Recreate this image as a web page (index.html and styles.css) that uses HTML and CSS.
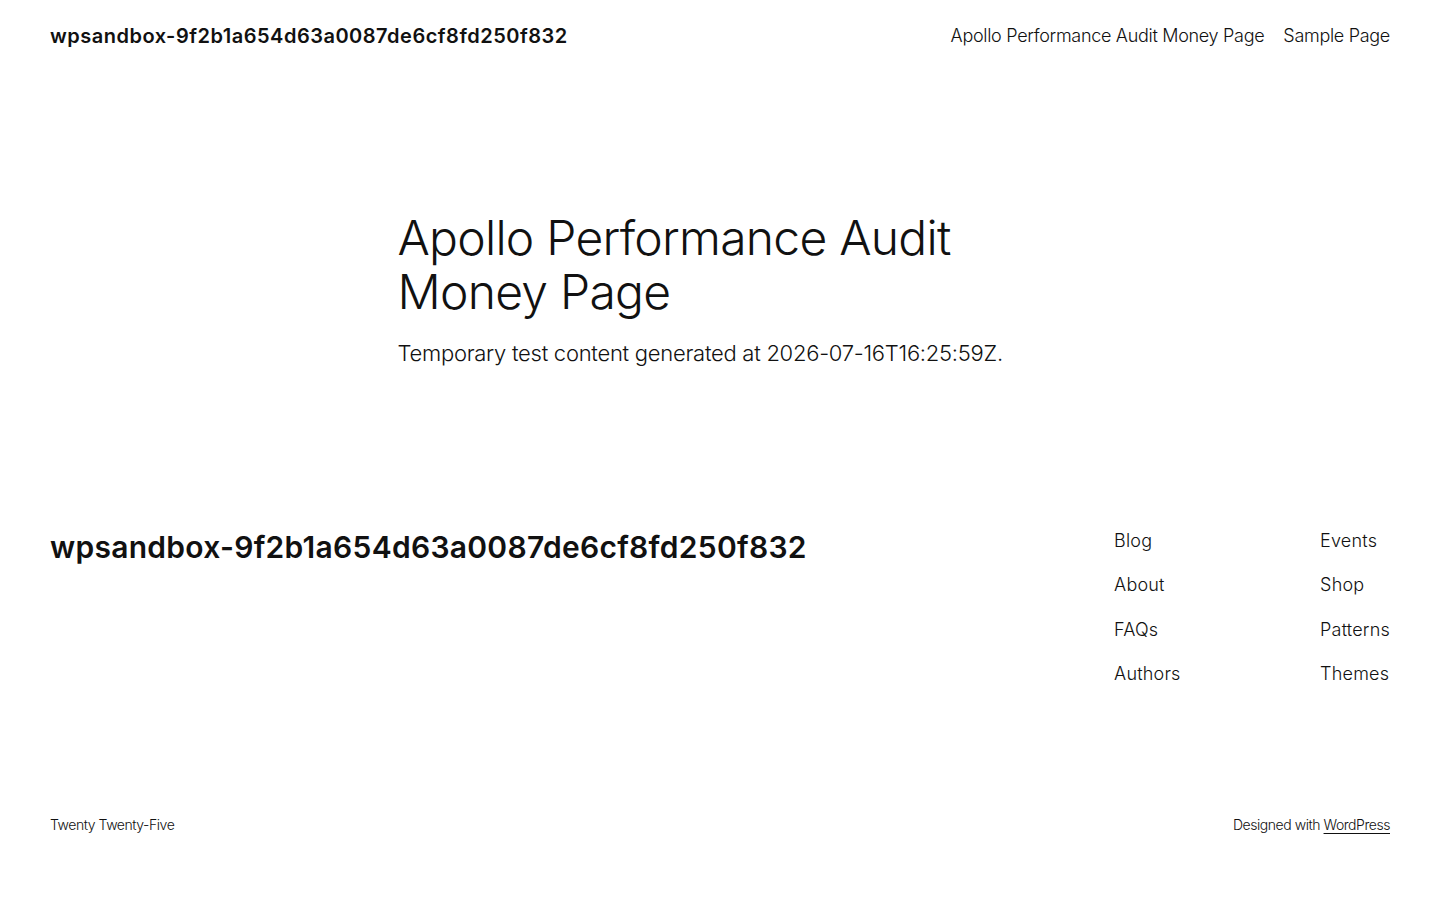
FILE: index.html
```html
<!DOCTYPE html>
<html lang="en">
<head>
<meta charset="utf-8">
<title>Apollo Performance Audit Money Page</title>
<link rel="stylesheet" href="styles.css">
</head>
<body>
<header class="site-header">
  <p class="site-title"><a href="#">wpsandbox-9f2b1a654d63a0087de6cf8fd250f832</a></p>
  <nav class="header-nav">
    <a href="#">Apollo Performance Audit Money Page</a>
    <a href="#">Sample Page</a>
  </nav>
</header>
<main class="content">
  <h1 class="page-title">Apollo Performance Audit Money Page</h1>
  <p class="page-text">Temporary test content generated at 2026-07-16T16:25:59Z.</p>
</main>
<footer class="site-footer">
  <div class="footer-top">
    <h2 class="footer-title"><a href="#">wpsandbox-9f2b1a654d63a0087de6cf8fd250f832</a></h2>
    <div class="footer-navs">
      <nav class="footer-col">
        <a href="#">Blog</a>
        <a href="#">About</a>
        <a href="#">FAQs</a>
        <a href="#">Authors</a>
      </nav>
      <nav class="footer-col">
        <a href="#">Events</a>
        <a href="#">Shop</a>
        <a href="#">Patterns</a>
        <a href="#">Themes</a>
      </nav>
    </div>
  </div>
  <div class="footer-bottom">
    <p class="small">Twenty Twenty-Five</p>
    <p class="small">Designed with <a href="#" class="ul">WordPress</a></p>
  </div>
</footer>
</body>
</html>
```

FILE: styles.css
```css
* { box-sizing: border-box; }
html, body { margin: 0; padding: 0; }
body {
  font-family: Inter, "Noto Sans", sans-serif;
  color: #111111;
  background: #ffffff;
  font-size: 18px;
  letter-spacing: -0.4px;
}
a { color: inherit; text-decoration: none; }
p, h1, h2 { margin: 0; }

.site-header {
  display: flex;
  justify-content: space-between;
  align-items: center;
  padding: 20px 50px;
  height: 71px;
}
.site-title {
  font-size: 20px;
  font-weight: 600;
  letter-spacing: 0.5px;
}
.header-nav {
  display: flex;
  gap: 19px;
  font-size: 18px;
  font-weight: 300;
  letter-spacing: -0.3px;
}

.content {
  width: 645px;
  margin: 0 auto;
  padding-top: 140px;
  height: 391px;
}
.page-title {
  font-size: 48px;
  font-weight: 300;
  line-height: 1.125;
  letter-spacing: -0.75px;
}
.page-text {
  margin-top: 19px;
  font-size: 22px;
  font-weight: 300;
  line-height: 1.4;
  letter-spacing: -0.27px;
}

.site-footer {
  padding: 0 50px;
}
.footer-top {
  display: flex;
  justify-content: space-between;
  align-items: flex-start;
  padding-top: 66px;
  height: 340px;
}
.footer-title {
  font-size: 30px;
  font-weight: 600;
  letter-spacing: 0.28px;
  line-height: 1.3;
}
.footer-navs {
  display: flex;
  gap: 0;
}
.footer-col {
  display: flex;
  flex-direction: column;
  gap: 19.3px;
  width: 206px;
  font-size: 18px;
  font-weight: 300;
  line-height: 25px;
  letter-spacing: 0.2px;
}
.footer-col:last-child { width: auto; }
.footer-bottom {
  display: flex;
  justify-content: space-between;
  align-items: center;
  height: 45px;
}
.small {
  font-size: 14px;
  font-weight: 300;
  letter-spacing: -0.45px;
}
.ul { text-decoration: underline; text-underline-offset: 3px; }
```
